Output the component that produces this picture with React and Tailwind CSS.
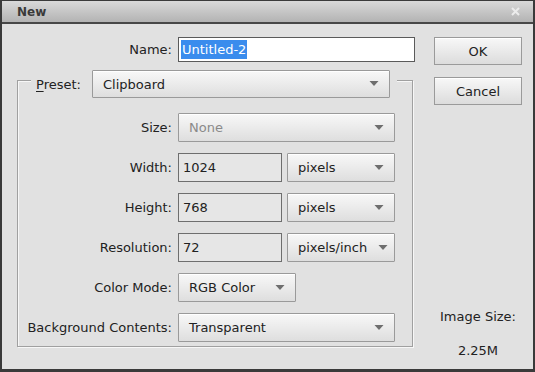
import React from "react";

const font = { fontFamily: '"DejaVu Sans", Verdana, sans-serif' };

function Arrow() {
  return (
    <svg width="10" height="6" viewBox="0 0 10 6" className="shrink-0">
      <path d="M0.5 0 L9.5 0 L5 5 Z" fill="#6e6e6e" />
    </svg>
  );
}

function Dropdown({ w, text, disabled, h = "h-[29px]", pr = "pr-[10px]" }) {
  return (
    <div
      className={`${w} ${h} ${pr} flex items-center justify-between pl-[10px] border border-[#9a9a9a] rounded-[1px] bg-gradient-to-b from-[#f8f8f8] to-[#dedede] shadow-[inset_0_1px_0_#ffffff]`}
    >
      <span className={disabled ? "text-[#8a8a8a]" : "text-[#222]"}>{text}</span>
      <Arrow />
    </div>
  );
}

function Field({ text }) {
  return (
    <div className="w-[104px] h-[29px] flex items-center pl-[4px] border border-[#6e6e6e] bg-[#e6e6e6] text-[#222]">
      {text}
    </div>
  );
}

function Label({ children }) {
  return <div className="w-[154px] text-right text-[#222] shrink-0">{children}</div>;
}

function Row({ label, children, mt = "mt-[11px]" }) {
  return (
    <div className={`flex items-center ${mt}`}>
      <Label>{label}</Label>
      <div className="ml-[6px] flex items-center gap-[5px]">{children}</div>
    </div>
  );
}

export default function App() {
  return (
    <div
      style={font}
      className="w-[535px] h-[372px] flex flex-col border-t border-x-2 border-b-[3px] border-[#3a3a3a] bg-[#3a3a3a] text-[13px] leading-none overflow-hidden"
    >
      <div className="h-[23px] shrink-0 flex items-center justify-between px-[15px] bg-gradient-to-b from-[#d9d9d9] to-[#b3b3b3] border-b-2 border-[#474747]">
        <span className="font-bold text-[12px] text-[#3a3a3a]">New</span>
        <svg width="9" height="9" viewBox="0 0 9 9" className="mr-[-2px]">
          <path d="M1 1 L8 8 M8 1 L1 8" stroke="#ececec" strokeWidth="2" />
        </svg>
      </div>
      <div className="flex-1 bg-[#e1e1e1] flex pl-[15px] pt-[13px]">
        <div className="w-[398px] flex flex-col">
          <div className="flex items-center h-[25px]">
            <div className="w-[155px] text-right text-[#222]">Name:</div>
            <div className="ml-[6px] w-[237px] h-[25px] bg-white border border-[#5a5a5a] flex items-center pl-[2px]">
              <span className="bg-[#3a8ced] text-white px-[1px] h-[19px] flex items-center">Untitled-2</span>
            </div>
          </div>
          <div className="mt-[18px] w-[396px] h-[267px] border border-[#a0a0a0] shadow-[1px_1px_0_#f7f7f7,inset_1px_1px_0_#f7f7f7] flex flex-col">
            <div className="mt-[-11px] ml-[13px] w-[366px] flex items-center bg-[#e1e1e1] px-[5px]">
              <span className="text-[#222] w-[56px]">
                <span className="underline underline-offset-2">P</span>reset:
              </span>
              <Dropdown w="w-[298px]" text="Clipboard" h="h-[28px]" />
            </div>
            <Row label="Size:" mt="mt-[15px]">
              <Dropdown w="w-[217px]" text="None" disabled />
            </Row>
            <Row label="Width:">
              <Field text="1024" />
              <Dropdown w="w-[108px]" text="pixels" />
            </Row>
            <Row label="Height:">
              <Field text="768" />
              <Dropdown w="w-[108px]" text="pixels" />
            </Row>
            <Row label="Resolution:">
              <Field text="72" />
              <Dropdown w="w-[108px]" text="pixels/inch" pr="pr-[6px]" />
            </Row>
            <Row label="Color Mode:">
              <Dropdown w="w-[118px]" text="RGB Color" />
            </Row>
            <Row label="Background Contents:">
              <Dropdown w="w-[217px]" text="Transparent" />
            </Row>
          </div>
        </div>
        <div className="ml-[19px] w-[88px] flex flex-col text-[#222]">
          <div className="h-[28px] flex items-center justify-center border border-[#9a9a9a] bg-gradient-to-b from-[#f8f8f8] to-[#dcdcdc] shadow-[inset_0_1px_0_#ffffff]">
            OK
          </div>
          <div className="mt-[12px] h-[28px] flex items-center justify-center border border-[#9a9a9a] bg-gradient-to-b from-[#f8f8f8] to-[#dcdcdc] shadow-[inset_0_1px_0_#ffffff]">
            Cancel
          </div>
          <div className="mt-[204px] text-center leading-[16px]">Image Size:</div>
          <div className="mt-[18px] text-center leading-[16px]">2.25M</div>
        </div>
      </div>
    </div>
  );
}
